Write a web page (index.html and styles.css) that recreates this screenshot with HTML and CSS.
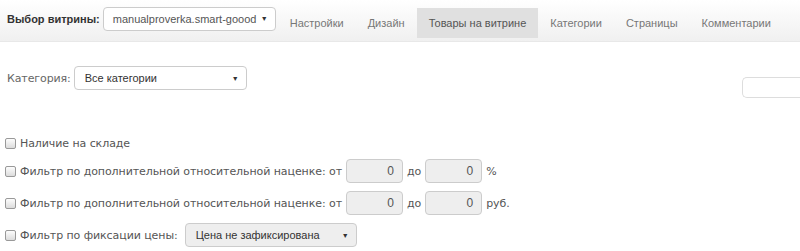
FILE: index.html
```html
<!DOCTYPE html>
<html lang="ru">
<head>
    <meta charset="UTF-8">
    <title>Товары на витрине</title>
    <link rel="stylesheet" href="styles.css">
</head>
<body>
    <!-- Верхняя панель -->
    <header class="topbar">
        <span class="shop-label">Выбор витрины:</span>
        <div class="select shop-select"><span>manualproverka.smart-goood</span><span class="arrow">▼</span></div>
        <nav class="tabs">
            <a href="#">Настройки</a>
            <a href="#">Дизайн</a>
            <a href="#" class="active">Товары на витрине</a>
            <a href="#">Категории</a>
            <a href="#">Страницы</a>
            <a href="#">Комментарии</a>
        </nav>
    </header>

    <!-- Категория -->
    <div class="category-row">
        <span class="label">Категория:</span>
        <div class="select cat-select"><span>Все категории</span><span class="arrow">▼</span></div>
        <div class="search"></div>
    </div>

    <!-- Фильтры -->
    <div class="filters">
        <div class="row first">
            <span class="check"></span>
            <span class="label">Наличие на складе</span>
        </div>
        <div class="row">
            <span class="check"></span>
            <span class="label">Фильтр по дополнительной относительной наценке: от</span>
            <div class="num">0</div>
            <span class="label">до</span>
            <div class="num">0</div>
            <span class="label">%</span>
        </div>
        <div class="row">
            <span class="check"></span>
            <span class="label">Фильтр по дополнительной относительной наценке: от</span>
            <div class="num">0</div>
            <span class="label">до</span>
            <div class="num">0</div>
            <span class="label">руб.</span>
        </div>
        <div class="row">
            <span class="check"></span>
            <span class="label">Фильтр по фиксации цены:</span>
            <div class="select fix-select"><span>Цена не зафиксирована</span><span class="arrow">▼</span></div>
        </div>
    </div>
</body>
</html>
```

FILE: styles.css
```css
* {
    margin: 0;
    padding: 0;
    box-sizing: border-box;
}
body {
    background: #fff;
    font-family: 'Liberation Sans', Arial, sans-serif;
    font-size: 11px;
    color: #555;
    overflow: hidden;
    width: 800px;
    height: 251px;
}
.topbar {
    height: 42px;
    display: flex;
    align-items: center;
    padding-left: 7px;
    background: linear-gradient(#fff, #f0f0f0);
    border-bottom: 1px solid #e8e8e8;
    white-space: nowrap;
}
.shop-label {
    font-weight: bold;
    color: #333;
    font-size: 11px;
    margin-top: -3px;
    flex-shrink: 0;
}
.select {
    display: flex;
    justify-content: space-between;
    align-items: center;
    flex-shrink: 0;
    white-space: nowrap;
    height: 24px;
    border: 1px solid #ccc;
    border-radius: 4px;
    background: #fff;
    color: #555;
    font-family: 'Liberation Sans', Arial, sans-serif;
    font-size: 11px;
    letter-spacing: 0;
    padding: 0 7px 0 9px;
}
.select .arrow {
    font-size: 7px;
    color: #333;
}
.shop-select {
    width: 173px;
    margin-left: 3px;
    margin-top: -4px;
}
.tabs {
    display: flex;
    flex-shrink: 0;
    margin-left: 2px;
    align-self: stretch;
    padding-top: 8px;
    padding-bottom: 3px;
}
.tabs a {
    display: flex;
    align-items: center;
    padding: 0 12px 0 12px;
    color: #777;
    text-decoration: none;
}
.tabs a.active {
    background: #e0e0e0;
    color: #555;
}
.category-row {
    display: flex;
    align-items: flex-start;
    padding-left: 7px;
    margin-top: 24px;
}
.category-row .label {
    font-family: 'DejaVu Sans', Verdana, sans-serif;
    font-size: 11px;
    color: #666;
    margin-top: 6px;
    letter-spacing: -0.1px;
}
.cat-select {
    width: 173px;
    margin-left: 3px;
    color: #333;
    padding-left: 10px;
}
.search {
    margin-left: auto;
    margin-top: 11px;
    width: 80px;
    height: 21px;
    border: 1px solid #ddd;
    border-right: none;
    border-radius: 5px 0 0 5px;
    margin-right: -22px;
}
.filters {
    padding-left: 5px;
    margin-top: 37px;
    font-family: 'DejaVu Sans', Verdana, sans-serif;
    font-size: 11px;
    color: #555;
    letter-spacing: -0.08px;
}
.row {
    display: flex;
    align-items: center;
    height: 24px;
    margin-top: 8px;
}
.row.first {
    margin-top: 0;
    height: 16px;
    margin-bottom: 7px;
}
.check {
    width: 11px;
    height: 11px;
    flex-shrink: 0;
    border: 1px solid #999;
    border-radius: 2px;
    background: linear-gradient(#fdfdfd, #dcdcdc);
    margin-right: 4px;
}
.label {
    white-space: nowrap;
}
.num {
    width: 57px;
    height: 24px;
    flex-shrink: 0;
    margin: 0 4px;
    border: 1px solid #ccc;
    border-radius: 4px;
    background: #eee;
    text-align: right;
    padding-right: 8px;
    line-height: 22px;
    font-family: 'Liberation Sans', Arial, sans-serif;
    font-size: 12px;
    letter-spacing: 0;
    color: #555;
}
.fix-select {
    width: 172px;
    margin-left: 7px;
    background: #eee;
    color: #333;
    padding-left: 10px;
}
```
